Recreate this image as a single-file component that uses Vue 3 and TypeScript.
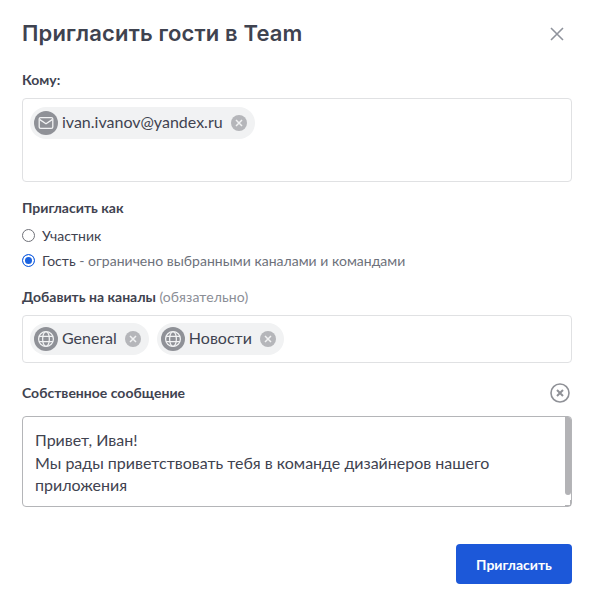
<script setup lang="ts">
type Chip = { label: string; icon: 'mail' | 'globe' };

const recipients: Chip[] = [{ label: 'ivan.ivanov@yandex.ru', icon: 'mail' }];
const channels: Chip[] = [
  { label: 'General', icon: 'globe' },
  { label: 'Новости', icon: 'globe' }
];
const message = 'Привет, Иван!\nМы рады приветствовать тебя в команде дизайнеров нашего приложения';
</script>

<template>
  <div class="modal">
    <header class="modal__header">
      <h1 class="modal__title">Пригласить гости в Team</h1>
      <svg class="modal__close" viewBox="0 0 14 14" width="14" height="14">
        <path d="M1 1l12 12M13 1L1 13" stroke="#8f939c" stroke-width="1.6" fill="none" />
      </svg>
    </header>

    <label class="label label--to">Кому:</label>
    <div class="box box--to">
      <div v-for="chip in recipients" :key="chip.label" class="chip">
        <span class="chip__icon">
          <svg viewBox="0 0 16 16" width="16" height="16">
            <rect x="1.2" y="2.7" width="13.6" height="10.6" rx="1.4" fill="none" stroke="#f1f2f3" stroke-width="1.3" />
            <path d="M1.8 4.6L8 8.8l6.2-4.2" fill="none" stroke="#f1f2f3" stroke-width="1.3" />
          </svg>
        </span>
        <span class="chip__label">{{ chip.label }}</span>
        <span class="chip__remove">
          <svg viewBox="0 0 8 8" width="8" height="8">
            <path d="M1 1l6 6M7 1L1 7" stroke="#f1f2f3" stroke-width="1.5" fill="none" />
          </svg>
        </span>
      </div>
    </div>

    <label class="label label--as">Пригласить как</label>
    <div class="radio radio--first">
      <span class="radio__dot"></span>
      <span class="radio__text">Участник</span>
    </div>
    <div class="radio">
      <span class="radio__dot radio__dot--on"></span>
      <span class="radio__text">Гость <span class="muted">- ограничено выбранными каналами и командами</span></span>
    </div>

    <label class="label label--channels">Добавить на каналы <span class="optional">(обязательно)</span></label>
    <div class="box box--channels">
      <div v-for="chip in channels" :key="chip.label" class="chip">
        <span class="chip__icon">
          <svg viewBox="0 0 16 16" width="18" height="18">
            <g fill="none" stroke="#f1f2f3" stroke-width="1.1">
              <circle cx="8" cy="8" r="6.6" />
              <ellipse cx="8" cy="8" rx="3" ry="6.6" />
              <path d="M1.8 5.7h12.4M1.8 10.3h12.4" />
            </g>
          </svg>
        </span>
        <span class="chip__label">{{ chip.label }}</span>
        <span class="chip__remove">
          <svg viewBox="0 0 8 8" width="8" height="8">
            <path d="M1 1l6 6M7 1L1 7" stroke="#f1f2f3" stroke-width="1.5" fill="none" />
          </svg>
        </span>
      </div>
    </div>

    <div class="message-head">
      <label class="label">Собственное сообщение</label>
      <svg class="message-head__clear" viewBox="0 0 20 20" width="20" height="20">
        <circle cx="10" cy="10" r="9" fill="none" stroke="#8f9197" stroke-width="1.6" />
        <path d="M7 7l6 6M13 7l-6 6" stroke="#8f9197" stroke-width="2" fill="none" />
      </svg>
    </div>
    <div class="textarea">
      <div class="textarea__text">{{ message }}</div>
      <div class="textarea__scroll">
        <div class="textarea__thumb"></div>
        <div class="textarea__grip"></div>
      </div>
    </div>

    <footer class="modal__footer">
      <button class="invite">Пригласить</button>
    </footer>
  </div>
</template>

<style>
html,
body {
  margin: 0;
  background: #ffffff;
}
</style>

<style scoped>
.modal {
  box-sizing: border-box;
  width: 594px;
  height: 605px;
  padding: 0 22px;
  font-family: Lato, 'Noto Sans', sans-serif;
  color: #3f4350;
  background: #ffffff;
  overflow: hidden;
}

.modal__header {
  display: flex;
  justify-content: space-between;
  align-items: center;
  height: 28px;
  padding-top: 19px;
}

.modal__title {
  margin: 0;
  font-family: Inter, sans-serif;
  font-size: 22px;
  line-height: 28px;
  font-weight: 600;
  letter-spacing: 0.15px;
}

.modal__close {
  margin-right: 8px;
  transform: translateY(1px);
}

.label {
  display: block;
  font-size: 14px;
  line-height: 20px;
  font-weight: 700;
}

.label--to {
  margin-top: 23px;
}

.label--as {
  margin-top: 16px;
}

.label--channels {
  margin-top: 18px;
}

.optional {
  font-weight: 400;
  color: #8b8e96;
  letter-spacing: 0.1px;
}

/* BOXES */
.box {
  box-sizing: border-box;
  display: flex;
  align-items: flex-start;
  gap: 8px;
  margin-top: 8px;
  padding: 8px 7px;
  border: 1px solid #e0e1e3;
  border-radius: 4px;
}

.box--to {
  height: 84px;
}

.box--channels {
  height: 48px;
  padding-top: 7px;
}

.chip {
  display: flex;
  align-items: center;
  height: 32px;
  padding: 0 8px 0 4px;
  border-radius: 16px;
  background: #f1f2f3;
}

.chip__icon {
  display: flex;
  justify-content: center;
  align-items: center;
  width: 24px;
  height: 24px;
  border-radius: 50%;
  background: #8f9197;
}

.chip__label {
  margin-left: 4px;
  padding-bottom: 2px;
  font-size: 16px;
  line-height: 24px;
}

.chip__remove {
  display: flex;
  justify-content: center;
  align-items: center;
  width: 16px;
  height: 16px;
  margin-left: 8px;
  border-radius: 50%;
  background: #b5b6ba;
}

/* RADIO */
.radio {
  display: flex;
  align-items: center;
  gap: 7px;
  margin-top: 7px;
  height: 18px;
  font-size: 14px;
  letter-spacing: 0.02px;
}

.radio--first {
  margin-top: 8px;
}

.radio__dot {
  box-sizing: border-box;
  width: 13px;
  height: 13px;
  border: 1px solid #6f7178;
  border-radius: 50%;
}

.radio__dot--on {
  border: 1px solid #1a62e0;
  background: #1a62e0;
  box-shadow: inset 0 0 0 2px #ffffff;
}

.muted {
  color: #6d717b;
}

/* MESSAGE */
.message-head {
  display: flex;
  justify-content: space-between;
  align-items: center;
  margin-top: 20px;
  height: 20px;
}

.message-head__clear {
  margin-right: 2px;
}

.textarea {
  box-sizing: border-box;
  display: flex;
  justify-content: space-between;
  height: 91px;
  margin-top: 13px;
  border: 1px solid #b4b5b8;
  border-radius: 4px;
}

.textarea__text {
  padding: 12px 0 0 12px;
  width: 490px;
  font-size: 16px;
  line-height: 22.5px;
  white-space: pre-line;
}

.textarea__scroll {
  display: flex;
  flex-direction: column;
  justify-content: space-between;
  width: 6px;
}

.textarea__thumb {
  height: 78px;
  background: #b3b3b6;
  border-radius: 0 3px 3px 3px;
}

.textarea__grip {
  height: 5px;
  border-right: 1px solid #b3b3b6;
  border-bottom: 1px solid #b3b3b6;
}

/* FOOTER */
.modal__footer {
  display: flex;
  justify-content: flex-end;
  margin-top: 37px;
}

.invite {
  width: 116px;
  height: 40px;
  border: none;
  border-radius: 4px;
  background: #1c58d9;
  color: #ffffff;
  font-family: Lato, sans-serif;
  font-size: 14px;
  font-weight: 700;
}
</style>
